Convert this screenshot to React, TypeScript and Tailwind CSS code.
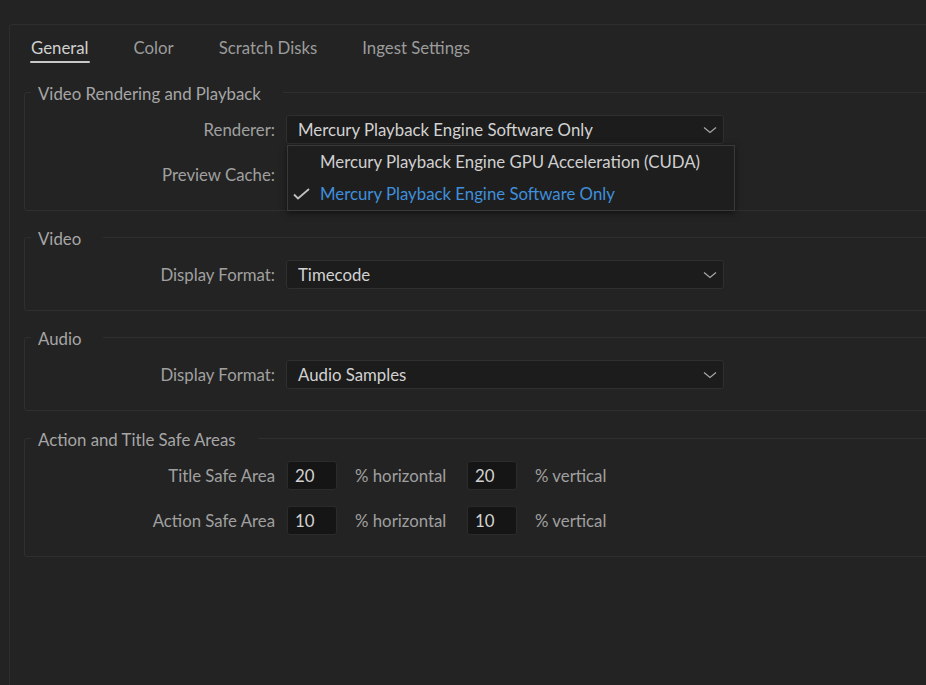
import React from "react";

const tabs = ["General", "Color", "Scratch Disks", "Ingest Settings"];

function Chevron() {
  return (
    <svg width="14" height="8" viewBox="0 0 14 8" className="shrink-0">
      <path d="M1 1.5 L7 6.5 L13 1.5" fill="none" stroke="#a8a8a8" strokeWidth="1.2" />
    </svg>
  );
}

function Select({ value }: { value: string }) {
  return (
    <div className="flex h-[29px] w-[438px] items-center justify-between rounded-[3px] border border-[#2f2f2f] bg-[#1c1c1c] pl-[11px] pr-[6px] text-[#d2d2d2]">
      <span>{value}</span>
      <Chevron />
    </div>
  );
}

function Group({ title, children }: { title: string; children: React.ReactNode }) {
  return (
    <fieldset className="mt-[14px] w-[1000px] rounded-[3px] border border-[#2f2f2f] pb-[21px]">
      <legend className="ml-[6px] pl-[7px] pr-[22px] pt-[4px] leading-[20px] text-[#a6a6a6]">{title}</legend>
      <div className="flex flex-col gap-[16px] pt-[11px]">{children}</div>
    </fieldset>
  );
}

function Row({ label, children }: { label: string; children?: React.ReactNode }) {
  return (
    <div className="flex h-[29px] items-center">
      <div className="mr-[11px] w-[250px] text-right text-[#a0a0a0]">{label}</div>
      {children}
    </div>
  );
}

function NumBox({ value }: { value: string }) {
  return (
    <div className="flex h-[29px] w-[50px] items-center rounded-[3px] border border-[#2b2b2b] bg-[#151515] pl-[7px] text-[#d2d2d2]">
      {value}
    </div>
  );
}

function SafeRow({ label, h, v }: { label: string; h: string; v: string }) {
  return (
    <Row label={label}>
      <div className="ml-[1px] flex items-center text-[#a0a0a0]">
        <NumBox value={h} />
        <span className="ml-[18px] w-[112px]">% horizontal</span>
        <NumBox value={v} />
        <span className="ml-[18px]">% vertical</span>
      </div>
    </Row>
  );
}

export default function App() {
  return (
    <div
      className="h-[685px] w-[926px] overflow-hidden bg-[#232323] pl-[9px] pt-[24px] text-[16.8px]"
      style={{ fontFamily: "Lato, 'Noto Sans', sans-serif" }}
    >
      <div className="h-[700px] w-[1000px] rounded-tl-[4px] border-l border-t border-[#2e2e2e] pl-[14px]">
        {/* Tabs */}
        <div className="ml-[7px] flex gap-[45px] pt-[11px]">
          {tabs.map((t, i) => (
            <div key={t} className="flex flex-col">
              <span className={`leading-[24px] ${i === 0 ? "text-[#d0d0d0]" : "text-[#9c9c9c]"}`}>{t}</span>
              {i === 0 ? (
                <div className="-mx-[1px] mt-[1px] h-[2px] rounded-full bg-[#c8c8c8]" />
              ) : (
                <div className="mt-[1px] h-[2px]" />
              )}
            </div>
          ))}
        </div>

        <div className="pt-[3px]">
          <Group title="Video Rendering and Playback">
            <Row label="Renderer:">
              <div className="relative">
                <Select value="Mercury Playback Engine Software Only" />
                <div className="absolute left-[1px] top-[30px] z-10 flex h-[66px] w-[448px] flex-col justify-center border border-[#3a3a3a] bg-[#1e1e1e] shadow-[0_2px_6px_rgba(0,0,0,0.5)]">
                  <div className="flex h-[33px] items-center pl-[32px] text-[#d0d0d0]">
                    Mercury Playback Engine GPU Acceleration (CUDA)
                  </div>
                  <div className="flex h-[33px] items-center text-[#3f8fdc]">
                    <svg width="32" height="14" viewBox="0 0 32 14" className="shrink-0">
                      <path d="M6 7.5 L10 11.5 L21 2" fill="none" stroke="#c0c0c0" strokeWidth="1.8" />
                    </svg>
                    Mercury Playback Engine Software Only
                  </div>
                </div>
              </div>
            </Row>
            <Row label="Preview Cache:">
              <div className="h-[29px] w-[438px]" />
            </Row>
          </Group>

          <Group title="Video">
            <Row label="Display Format:">
              <Select value="Timecode" />
            </Row>
          </Group>

          <Group title="Audio">
            <Row label="Display Format:">
              <Select value="Audio Samples" />
            </Row>
          </Group>

          <div className="pt-[1px]">
            <Group title="Action and Title Safe Areas">
              <SafeRow label="Title Safe Area" h="20" v="20" />
              <SafeRow label="Action Safe Area" h="10" v="10" />
            </Group>
          </div>
        </div>
      </div>
    </div>
  );
}
